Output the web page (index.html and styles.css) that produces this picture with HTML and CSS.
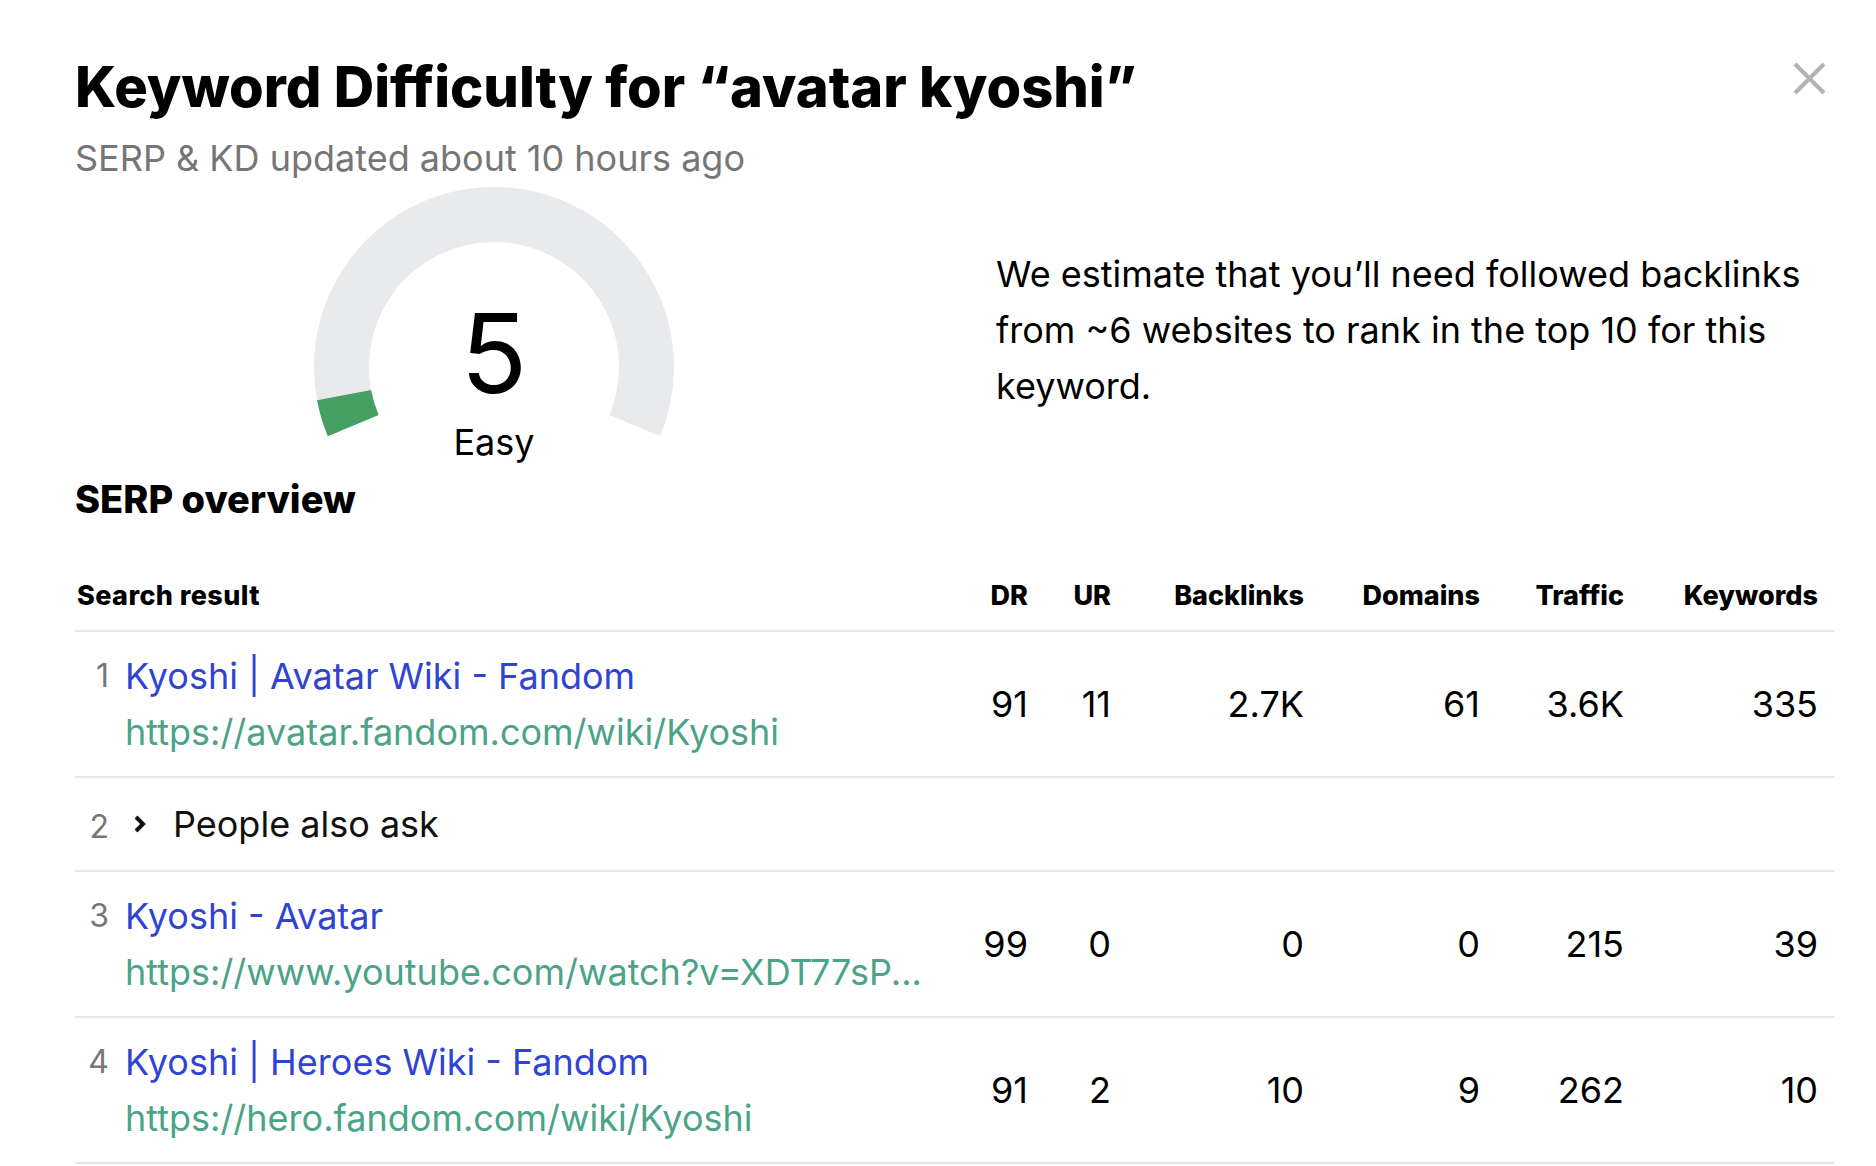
FILE: index.html
```html
<!DOCTYPE html>
<html lang="en">
<head>
<meta charset="utf-8">
<title>Keyword Difficulty</title>
<link rel="stylesheet" href="styles.css">
</head>
<body>
<div class="modal">
  <button class="close" aria-label="Close">
    <svg width="33" height="33" viewBox="0 0 33 33"><path d="M2 2 L31 31 M31 2 L2 31" stroke="#b3b3b3" stroke-width="4.2" fill="none"/></svg>
  </button>
  <h1 class="title">Keyword Difficulty for “avatar kyoshi”</h1>
  <p class="subtitle">SERP &amp; KD updated about 10 hours ago</p>
  <div class="summary">
    <div class="gauge">
      <svg class="gauge-svg" width="360" height="250" viewBox="0 0 360 250">
        <path d="M39.2 238.6 A152.5 152.5 0 1 1 320.8 238.6" stroke="#e9eaec" stroke-width="55" fill="none"/>
        <path d="M39.2 238.6 A152.5 152.5 0 0 1 30.1 208.1" stroke="#46a063" stroke-width="55" fill="none"/>
      </svg>
      <div class="gauge-value">5</div>
      <div class="gauge-label">Easy</div>
    </div>
    <p class="estimate">We estimate that you’ll need followed backlinks from ~6 websites to rank in the top 10 for this keyword.</p>
  </div>
  <h2 class="section-title">SERP overview</h2>
  <table class="serp">
    <colgroup>
      <col class="c-result"><col class="c-dr"><col class="c-ur"><col class="c-bl"><col class="c-dom"><col class="c-tr"><col class="c-kw">
    </colgroup>
    <thead>
      <tr>
        <th class="th-result">Search result</th>
        <th>DR</th><th>UR</th><th>Backlinks</th><th>Domains</th><th>Traffic</th><th>Keywords</th>
      </tr>
    </thead>
    <tbody>
      <tr>
        <td class="result">
          <div class="result-inner">
            <span class="rank">1</span>
            <div class="result-text">
              <a class="result-title" href="#">Kyoshi | Avatar Wiki - Fandom</a>
              <div class="result-url">https://avatar.fandom.com/wiki/Kyoshi</div>
            </div>
          </div>
        </td>
        <td>91</td><td>11</td><td>2.7K</td><td>61</td><td>3.6K</td><td>335</td>
      </tr>
      <tr class="paa">
        <td class="result">
          <div class="result-inner paa-inner">
            <span class="rank">2</span>
            <span class="chevron"><svg width="16" height="20" viewBox="0 0 16 20"><path d="M4 3 L11 10 L4 17" stroke="#111" stroke-width="4" fill="none"/></svg></span>
            <span class="paa-text">People also ask</span>
          </div>
        </td>
        <td></td><td></td><td></td><td></td><td></td><td></td>
      </tr>
      <tr>
        <td class="result">
          <div class="result-inner">
            <span class="rank">3</span>
            <div class="result-text">
              <a class="result-title" href="#">Kyoshi - Avatar</a>
              <div class="result-url">https://www.youtube.com/watch?v=XDT77sP...</div>
            </div>
          </div>
        </td>
        <td>99</td><td>0</td><td>0</td><td>0</td><td>215</td><td>39</td>
      </tr>
      <tr>
        <td class="result">
          <div class="result-inner">
            <span class="rank">4</span>
            <div class="result-text">
              <a class="result-title" href="#">Kyoshi | Heroes Wiki - Fandom</a>
              <div class="result-url">https://hero.fandom.com/wiki/Kyoshi</div>
            </div>
          </div>
        </td>
        <td>91</td><td>2</td><td>10</td><td>9</td><td>262</td><td>10</td>
      </tr>
    </tbody>
  </table>
</div>
</body>
</html>
```

FILE: styles.css
```css
* { box-sizing: border-box; }
html, body { margin: 0; padding: 0; background: #fff; }
body {
  font-family: Inter, "Noto Sans", sans-serif;
  color: #111;
}
.modal {
  position: relative;
  padding: 54px 43px 0 75px;
}
.close {
  position: absolute;
  top: 62px;
  left: 1793px;
  width: 33px;
  height: 33px;
  padding: 0;
  border: 0;
  background: none;
  cursor: pointer;
}
.close svg { display: block; }
.title {
  margin: 0;
  font-size: 56px;
  line-height: 67px;
  font-weight: 800;
  color: #000;
}
.subtitle {
  margin: 19px 0 0;
  font-size: 36px;
  line-height: 36px;
  color: #767676;
}
.summary {
  display: flex;
  align-items: flex-start;
  margin-top: 11px;
}
.gauge {
  position: relative;
  width: 360px;
  height: 280px;
  margin-left: 239px;
  flex: none;
}
.gauge-svg { display: block; }
.gauge-value {
  position: absolute;
  left: 0;
  right: 0;
  top: 111px;
  text-align: center;
  font-size: 110px;
  line-height: 110px;
  color: #000;
}
.gauge-label {
  position: absolute;
  left: 0;
  right: 0;
  top: 234px;
  text-align: center;
  font-size: 36px;
  line-height: 42px;
  color: #000;
}
.estimate {
  flex: 1;
  margin: 59px 0 0 322px;
  font-size: 36px;
  line-height: 56px;
  color: #000;
}
.section-title {
  margin: 12px 0 0;
  font-size: 38px;
  line-height: 40px;
  font-weight: 800;
  color: #000;
}
.serp {
  margin-top: 62px;
  width: 100%;
  border-collapse: collapse;
  table-layout: fixed;
}
.c-result { width: 886px; }
.c-dr { width: 83px; }
.c-ur { width: 83px; }
.c-bl { width: 193px; }
.c-dom { width: 176px; }
.c-tr { width: 144px; }
.c-kw { width: 194px; }
.serp th {
  padding: 0 16px 19px 0;
  font-size: 27px;
  line-height: 30px;
  font-weight: 800;
  text-align: right;
  color: #000;
  border-bottom: 2px solid #e6e6e6;
  white-space: nowrap;
}
.serp th.th-result { text-align: left; padding-left: 2px; letter-spacing: 0.4px; }
.serp td {
  padding: 16px 16px 16px 0;
  font-size: 36px;
  line-height: 56px;
  text-align: right;
  color: #000;
  border-bottom: 2px solid #e6e6e6;
  vertical-align: middle;
  white-space: nowrap;
}
.serp td.result { text-align: left; }
.serp tr.paa td { padding-top: 18px; padding-bottom: 18px; }
.result-inner {
  display: flex;
  align-items: flex-start;
}
.rank {
  flex: none;
  width: 34px;
  text-align: right;
  font-size: 32px;
  color: #777;
  margin-right: 16px;
}
.result-text {
  display: flex;
  flex-direction: column;
  min-width: 0;
}
.result-title {
  color: #3044d4;
  text-decoration: none;
}
.result-url {
  color: #4ba388;
}
.paa-inner { align-items: center; }
.paa-inner .rank { position: relative; top: 3px; }
.chevron {
  flex: none;
  width: 48px;
  display: flex;
  align-items: center;
  padding-left: 7px;
}
.chevron svg { display: block; }
.paa-text { color: #111; }
```
